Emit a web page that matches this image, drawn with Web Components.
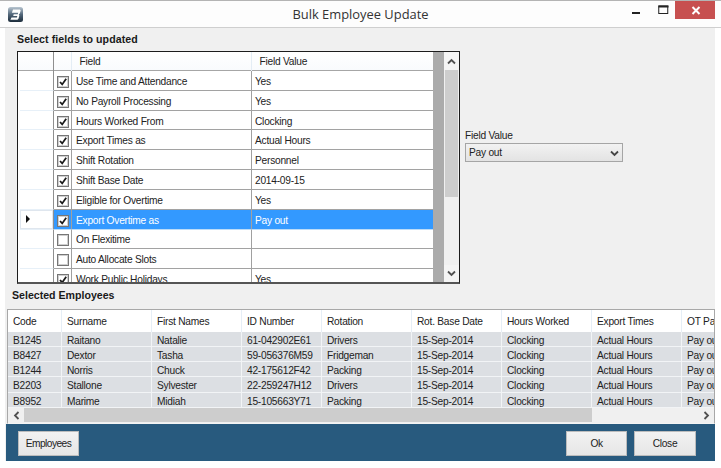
<!DOCTYPE html>
<html lang="en"><head><meta charset="utf-8"><title>Bulk Employee Update</title>
<style>
html,body{margin:0;padding:0;background:#fff;overflow:hidden}
body{width:721px;height:468px;font:10.2px/14px "Liberation Sans",Arial,sans-serif;letter-spacing:-.24px;color:#222}
</style></head><body>
<bulk-window></bulk-window>
<script>
const def=(name,css,html,init)=>customElements.define(name,class extends HTMLElement{
  connectedCallback(){ if(this.shadowRoot)return; const r=this.attachShadow({mode:'open'});
    r.innerHTML='<style>'+css+'</style>'+(typeof html==='function'?html(this):html); init&&init(r,this);}
});
const esc=s=>String(s).replace(/&/g,'&amp;').replace(/</g,'&lt;');

def('win-titlebar',`
:host{display:flex;align-items:center;height:26px;border-top:1px solid #b4b4b4;border-bottom:1px solid #cfcfcf;background:#fdfdfd}
.left{flex:1 1 0;display:flex;align-items:center}
.icon{margin:0 0 0 8px;width:15px;height:15px;flex:none}
.title{flex:none;text-align:center;font:12.9px/16px "Open Sans","Liberation Sans",sans-serif;letter-spacing:0;color:#333;margin:0 0 1px 6px}
.btns{flex:1 1 0;display:flex;align-self:flex-start;justify-content:flex-end;margin-right:6px}
.b{height:18px;display:flex;align-items:center;justify-content:center}
.x{width:40px;height:18px;background:#c75050;display:flex;align-items:center;justify-content:center}
`,`<div class="left"><svg class="icon" viewBox="0 0 15 15"><defs><linearGradient id="g" x1="0" y1="0" x2="0" y2="1"><stop offset="0" stop-color="#b9c6d1"/><stop offset=".5" stop-color="#52677a"/><stop offset="1" stop-color="#1b2b3a"/></linearGradient></defs><rect width="15" height="15" rx="2.500" fill="url(#g)"/><path d="M5 2.400h7l.7 1-.9 3.200-1 .9 .6 1-.9 3.300-1 .9H2.400l1.100-2.200h5.400l.4-1.500H5.200l.5-1.800h4.100l.4-1.500H3.900z" fill="#fff"/></svg></div>
<div class="title"><slot></slot></div>
<div class="btns">
<div class="b" style="width:27px;padding-right:4px;box-sizing:border-box"><svg width="10" height="10" viewBox="0 0 10 10"><rect x="1" y="7" width="8" height="2" fill="#222"/></svg></div>
<div class="b" style="width:24px"><svg width="11" height="10" viewBox="0 0 11 10"><rect x=".75" y="1" width="9" height="7.500" fill="none" stroke="#222" stroke-width="1"/><rect x=".5" y=".5" width="10" height="2" fill="#222"/></svg></div>
<div class="x"><svg width="10" height="9" viewBox="0 0 10 9" style="margin-left:2px"><path d="M1.500 1 8.500 8M8.500 1 1.500 8" stroke="#fff" stroke-width="2"/></svg></div>
</div>`);

def('section-label',`:host{display:block;font:bold 10.6px/14px "Liberation Sans",Arial,sans-serif;letter-spacing:0;color:#1a1a1a}
:host([wide]){letter-spacing:.08px}`,`<slot></slot>`);

def('check-box',`
:host{display:block;width:12px;height:12px;box-sizing:border-box;border:1px solid #767676;background:#fff;box-shadow:inset 0 0 0 1px #cfcfcf}
svg{display:block}
`,h=>h.hasAttribute('checked')?`<svg width="10" height="10" viewBox="0 0 10 10"><path d="M2 5 4.200 7.400 8.200 1.800" fill="none" stroke="#1a1a1a" stroke-width="1.800"/></svg>`:``);

def('field-row',`
:host{display:grid;grid-template-columns:36px 18px 180px 181px;height:19.82px;box-sizing:border-box;background:#fff;color:#222}
:host([selected]){color:#fff}
div{box-sizing:border-box;border-bottom:1px solid #a2a2a2;display:flex;align-items:center;white-space:nowrap;padding-top:3px}
.h{border-bottom:1px solid #e7f0f8;margin-left:2px;border-right:1px solid #8f8f8f;padding-top:0}
.c{justify-content:center;border-right:1px solid #a0a0a0;padding-left:1px}
.f{border-right:1px solid #a0a0a0;padding-left:4px}
.v{padding-left:3px}
:host([selected]) .c,:host([selected]) .f,:host([selected]) .v{background:#3399ff;border-bottom-color:#bcdcf8}
:host([selected]) .h{box-shadow:inset 0 0 0 1px #dfe6ee}
.tri{width:0;height:0;border-left:4px solid #111;border-top:4px solid transparent;border-bottom:4px solid transparent;margin-left:6px}
`,h=>`<div class="h">${h.hasAttribute('selected')?'<span class="tri"></span>':''}</div>
<div class="c"><check-box ${h.hasAttribute('on')?'checked':''}></check-box></div>
<div class="f">${esc(h.getAttribute('field'))}</div><div class="v">${esc(h.getAttribute('value')||'')}</div>`);

def('v-scroll',`
:host{display:flex;flex-direction:column;width:15px;background:#f0f0f0;align-items:center;box-sizing:border-box}
.a{height:18px;width:100%;display:flex;align-items:center;justify-content:center;flex:none;background:#f4f4f4}
.t{width:13px;height:127px;background:#cdcdcd;flex:none}
.s{flex:1}
`,`<div class="a"><svg width="9" height="7" viewBox="0 0 9 7"><path d="M1 5.500 4.500 2 8 5.500" fill="none" stroke="#505050" stroke-width="1.800"/></svg></div>
<div class="t"></div><div class="s"></div>
<div class="a" style="height:17px"><svg width="9" height="7" viewBox="0 0 9 7"><path d="M1 1.500 4.500 5 8 1.500" fill="none" stroke="#505050" stroke-width="1.800"/></svg></div>`);

def('fields-grid',`
:host{display:flex;width:443px;height:233px;box-sizing:border-box;border:1px solid #1c1c1c;border-bottom:2px solid #555;background:#ababab;flex:none}
.main{width:415px;overflow:hidden;background:#fff;flex:none}
.head{display:grid;grid-template-columns:36px 18px 180px 181px;height:19px;box-sizing:border-box;border-bottom:1px solid #a6a6a6;background:linear-gradient(#fff,#f9fbfd)}
.head div{box-sizing:border-box;border-right:1px solid #e4edf5;padding-left:7.500px;line-height:20px}
.head .r{border-right:1px solid #8f8f8f}
.gutter{flex:1;background:#ababab}
`,()=>{
 const rows=[['Use Time and Attendance','Yes',1],['No Payroll Processing','Yes',1],['Hours Worked From','Clocking',1],['Export Times as','Actual Hours',1],['Shift Rotation','Personnel',1],['Shift Base Date','2014-09-15',1],['Eligible for Overtime','Yes',1],['Export Overtime as','Pay out',1,1],['On Flexitime','',0],['Auto Allocate Slots','',0],['Work Public Holidays','Yes',1]];
 return `<div class="main"><div class="head"><div class="r"></div><div></div><div>Field</div><div style="border:0">Field Value</div></div>
 ${rows.map(r=>`<field-row field="${esc(r[0])}" value="${esc(r[1])}" ${r[2]?'on':''} ${r[3]?'selected':''}></field-row>`).join('')}</div>
 <div class="gutter"></div><v-scroll></v-scroll>`;
});

def('value-select',`
:host{display:flex;align-items:center;justify-content:space-between;width:158px;height:19px;box-sizing:border-box;border:1px solid #a5a5a5;background:linear-gradient(#f2f2f2,#e3e3e3);padding:1px 3px 0 3px;color:#222}
`,`<span><slot></slot></span><svg width="9" height="7" viewBox="0 0 9 7"><path d="M1 1.500 4.500 5 8 1.500" fill="none" stroke="#444" stroke-width="1.800"/></svg>`);

def('field-panel',`:host{display:block;margin:78px 0 0 5px}
.l{line-height:14px;height:14px}`,`<div class="l">Field Value</div><value-select>Pay out</value-select>`);

def('employees-grid',`
:host{display:block;margin-left:2px;width:708px;height:115px;box-sizing:border-box;border:1px solid #a8a8a8;border-bottom:1px solid #f4f4f4;background:#f0f0f0;overflow:hidden;flex:none}
.g{display:grid;grid-template-columns:54px 90px 90px 80px 90px 90px 90px 90px 33px;overflow:hidden;width:706px}
.hc{height:21.500px;background:#fff;box-sizing:border-box;border-right:1px solid #e6eef6;padding:1px 0 0 5px;line-height:22px;white-space:nowrap;overflow:hidden}
.c{height:15.250px;background:#dcdfe3;box-sizing:border-box;border-right:1px solid #f2f4f6;border-bottom:1px solid #f2f4f6;padding:1px 0 0 5px;line-height:15px;white-space:nowrap;overflow:hidden}
`,()=>{
 const hd=['Code','Surname','First Names','ID Number','Rotation','Rot. Base Date','Hours Worked','Export Times','OT Payout'];
 const d=[['B1245','Raitano','Natalie','61-042902E61','Drivers'],['B8427','Dextor','Tasha','59-056376M59','Fridgeman'],['B1244','Norris','Chuck','42-175612F42','Packing'],['B2203','Stallone','Sylvester','22-259247H12','Drivers'],['B8952','Marime','Midiah','15-105663Y71','Packing']];
 return `<div class="g">${hd.map(h=>`<div class="hc">${h}</div>`).join('')}${d.map(r=>[...r,'15-Sep-2014','Clocking','Actual Hours','Pay out'].map(c=>`<div class="c">${c}</div>`).join('')).join('')}</div><h-scroll></h-scroll>`;
});

def('h-scroll',`
:host{display:flex;height:14px;background:#f0f0f0;align-items:stretch;margin-top:.250px}
.a{width:16px;display:flex;align-items:center;justify-content:center;flex:none;background:#f0f0f0}
.t{width:568px;background:#cdcdcd;flex:none}
.s{flex:1}
`,`<div class="a"><svg width="7" height="9" viewBox="0 0 7 9"><path d="M5.500 1 2 4.500 5.500 8" fill="none" stroke="#505050" stroke-width="1.800"/></svg></div><div class="t"></div><div class="s"></div>
<div class="a"><svg width="7" height="9" viewBox="0 0 7 9"><path d="M1.500 1 5 4.500 1.500 8" fill="none" stroke="#505050" stroke-width="1.800"/></svg></div>`);

def('win-button',`
:host{display:flex;align-items:center;justify-content:center;width:61px;height:25px;box-sizing:border-box;border:1px solid #bcbcbc;background:linear-gradient(#f2f2f2,#e6e6e6);color:#222;flex:none;letter-spacing:-.55px}
:host([wide]){width:62px;letter-spacing:-.3px}
`,`<slot></slot>`);

def('bottom-bar',`
:host{display:flex;height:37px;box-sizing:border-box;background:#285a7e;padding:7px 19px 5px 12px;margin:0 0 0 1px;width:709px;gap:7px}
.sp{flex:1}
`,`<win-button>Employees</win-button><div class="sp"></div><win-button>Ok</win-button><win-button wide>Close</win-button>`);

def('bulk-window',`
:host{display:block;width:721px;height:468px;background:#fff}
.client{margin-left:5px;width:710px;height:433px;background:#f0f0f0;box-sizing:border-box;padding-top:4px;display:flex;flex-direction:column}
.top{display:flex;margin:5px 0 0 12px;height:233px;flex:none}
.l1{margin-left:12px}
.l2{margin:4px 0 7px 7px}
`,`<win-titlebar>Bulk Employee Update</win-titlebar>
<div class="client">
<section-label class="l1" wide>Select fields to updated</section-label>
<div class="top"><fields-grid></fields-grid><field-panel></field-panel></div>
<section-label class="l2">Selected Employees</section-label>
<employees-grid></employees-grid>
<bottom-bar></bottom-bar>
</div>`);
</script>
</body></html>
